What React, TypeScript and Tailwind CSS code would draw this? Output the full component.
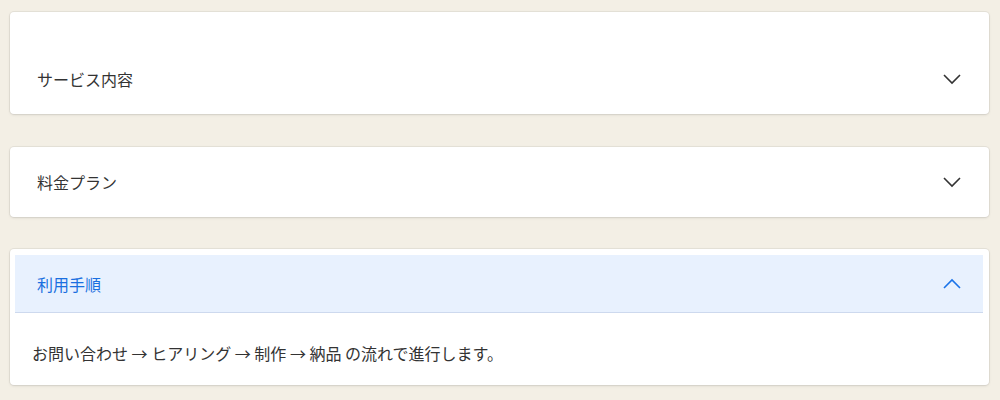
const font = { fontFamily: '"Noto Sans CJK JP", "Noto Sans", sans-serif' };

const ChevronDown = () => (
  <svg width="18" height="12" viewBox="0 0 18 12" fill="none" className="text-[#333]">
    <polyline points="1,2 9,10 17,2" stroke="currentColor" strokeWidth="1.6" />
  </svg>
);

const ChevronUp = () => (
  <svg width="18" height="12" viewBox="0 0 18 12" fill="none" className="text-[#1a73e8]">
    <polyline points="1,10 9,2 17,10" stroke="currentColor" strokeWidth="1.6" />
  </svg>
);

const card =
  "bg-white rounded-[4px] shadow-[0_0_0_1px_rgba(0,0,0,0.05),0_1px_3px_rgba(0,0,0,0.1)]";

export default function App() {
  return (
    <div
      className="min-h-screen bg-[#f3efe5] pl-[10px] pr-[11px] pt-[12px] pb-[14px] text-[16px] text-[#333]"
      style={font}
    >
      <div className={`${card} pt-[32px]`}>
        <div className="flex h-[70px] items-center justify-between pl-[27px] pr-[28px]">
          <span>サービス内容</span>
          <ChevronDown />
        </div>
      </div>

      <div className={`${card} mt-[33px]`}>
        <div className="flex h-[70px] items-center justify-between pl-[27px] pr-[28px]">
          <span>料金プラン</span>
          <ChevronDown />
        </div>
      </div>

      <div className={`${card} mt-[32px] pl-[5px] pr-[6px] pt-[6px] pb-[6px]`}>
        <div className="flex h-[58px] items-center justify-between border-b border-[#cdd9ee] bg-[#e8f1fe] pl-[22px] pr-[22px] text-[#1a6fe0]">
          <span>利用手順</span>
          <ChevronUp />
        </div>
        <div className="pl-[17px] pt-[28px] pb-[14px] leading-[24px]">
          お問い合わせ → ヒアリング → 制作 → 納品 の流れで進行します。
        </div>
      </div>
    </div>
  );
}
